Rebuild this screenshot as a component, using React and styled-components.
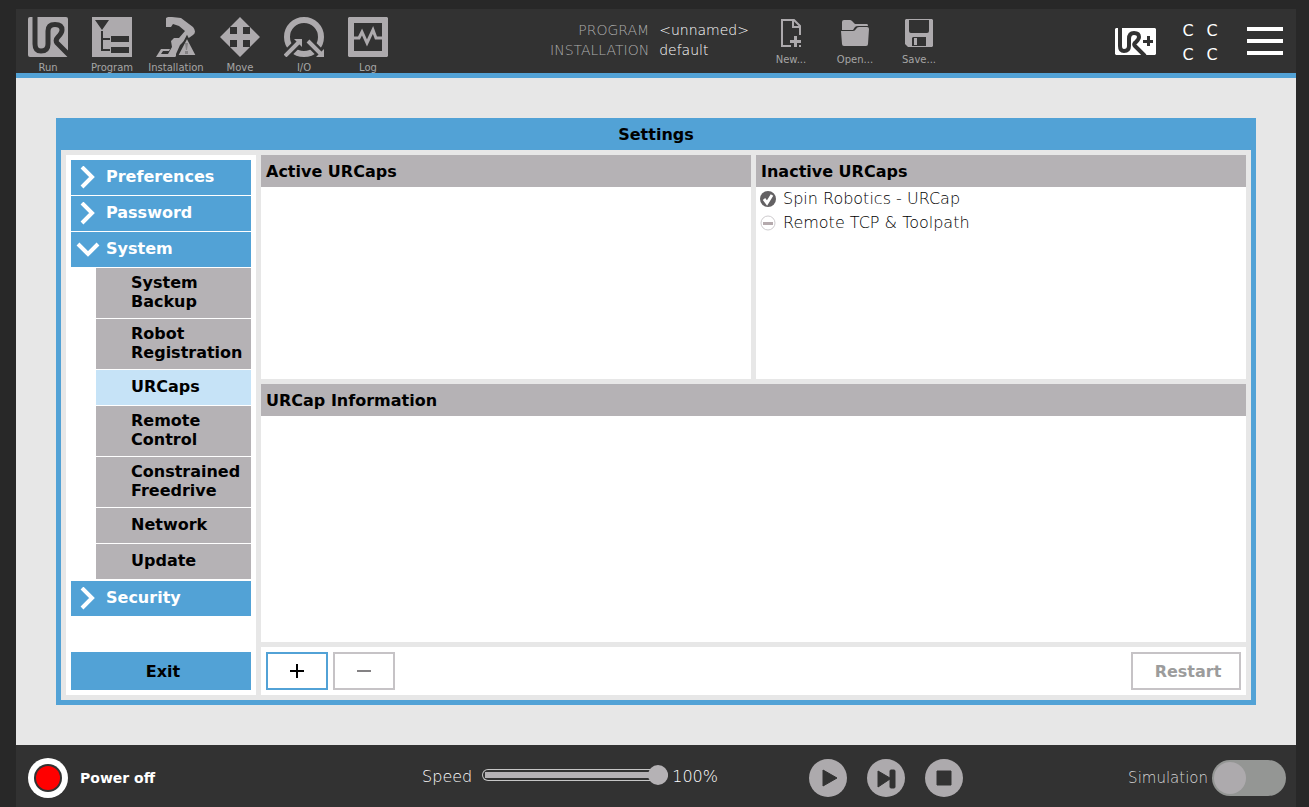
/* eslint-disable react/prop-types */

import React, { useState } from 'react'
import styled, { createGlobalStyle, css } from 'styled-components'

const blue = '#52a2d6'
const dark = '#323232'
const grey = '#b5b2b5'
const light = '#e7e7e7'
const icon = '#adaaad'

const GlobalStyle = createGlobalStyle`
  * {
    box-sizing: border-box;
  }

  body {
    margin: 0;
    background: #282828;
    font-family: 'DejaVu Sans', sans-serif;
    font-size: 16px;
    line-height: 19px;
  }

  button,
  input {
    font: inherit;
    margin: 0;
  }

  svg {
    display: block;
    flex: none;
  }
`

const Screen = styled.div`
  display: flex;
  flex-direction: column;
  min-height: 100vh;
  padding: 9px 13px 0 16px;
`

const Spacer = styled.div`
  flex: ${({ $grow }) => $grow} 0 0;
`

// Header

const Header = styled.header`
  display: flex;
  height: 69px;
  background: ${dark};
  border-bottom: 5px solid ${blue};
`

const Group = styled.nav`
  display: flex;
`

const ToolButton = styled.button`
  display: flex;
  flex-direction: column;
  align-items: center;
  gap: ${({ $small }) => ($small ? '7px' : '5px')};
  width: 64px;
  padding: ${({ $small }) => ($small ? '10px' : '8px')} 0 0;
  border: 0;
  background: none;
  color: #a5a5a5;
  font-size: 10px;
  line-height: 11px;
`

const FileInfo = styled.dl`
  display: grid;
  grid-template-columns: auto auto;
  align-content: start;
  column-gap: 10px;
  margin: 0;
  padding: 11px 10px 0 0;
  font-size: 14px;
  font-weight: 200;
  line-height: 20px;

  dt {
    color: #adadad;
    text-align: right;
  }

  dd {
    margin: 0;
    color: #fff;
  }
`

const HeaderTools = styled.div`
  display: flex;
  align-items: center;
  padding-right: 13px;
`

const Checksum = styled.div`
  display: grid;
  grid-template-columns: 24px 24px;
  margin: 0 23px 0 20px;
  padding-top: 3px;
  color: #fff;
  line-height: 24px;
  text-align: center;
`

const IconButton = styled.button`
  padding: 0;
  border: 0;
  background: none;
`

// Settings

const Workspace = styled.main`
  display: flex;
  flex: 1;
  padding: 40px;
  background: ${light};
`

const Settings = styled.section`
  display: flex;
  flex: 1;
  flex-direction: column;
  border: 5px solid ${blue};
  border-top: 0;
  background: ${light};
`

const SettingsTitle = styled.h1`
  height: 32px;
  margin: 0;
  background: ${blue};
  font-size: 16px;
  line-height: 34px;
  text-align: center;
`

const SettingsBody = styled.div`
  display: flex;
  flex: 1;
  gap: 5px;
  padding: 5px;
`

const Sidebar = styled.nav`
  display: flex;
  flex-direction: column;
  gap: 1px;
  width: 190px;
  padding: 5px;
  background: #fff;
`

const Section = styled.button`
  display: flex;
  align-items: center;
  gap: 6px;
  height: 35px;
  padding: 0 5px 0 5px;
  border: 0;
  background: ${blue};
  color: #fff;
  font-weight: 700;

  span {
    padding-bottom: 2px;
  }
`

const SubMenu = styled.div`
  display: flex;
  flex-direction: column;
  gap: 1px;
  margin: 0 0 1px 25px;
`

const SubItem = styled.button`
  min-height: 35px;
  padding: 5px 4px 7px 35px;
  border: 0;
  background: ${({ $active }) => ($active ? '#c6e3f7' : grey)};
  color: #000;
  font-weight: 700;
  text-align: left;
`

const buttonBase = css`
  display: flex;
  align-items: center;
  justify-content: center;
  height: 38px;
  font-weight: 700;
`

const ExitButton = styled.button`
  ${buttonBase}
  margin-top: auto;
  padding-left: 10px;
  border: 0;
  background: ${blue};
  color: #000;
`

const Content = styled.div`
  display: grid;
  flex: 1;
  grid-template-columns: 1fr 1fr;
  grid-template-rows: 224fr 258fr 48px;
  gap: 5px;
`

const Panel = styled.section`
  grid-column: ${({ $wide }) => ($wide ? '1 / -1' : 'auto')};
  background: #fff;
`

const PanelTitle = styled.h2`
  height: 32px;
  margin: 0;
  padding: 0 5px;
  background: ${grey};
  font-size: 16px;
  line-height: 34px;
`

const CapList = styled.ul`
  margin: 0;
  padding: 0 4px;
  list-style: none;
`

const CapItem = styled.li`
  display: flex;
  align-items: center;
  gap: 7px;
  height: 24px;
  font-weight: 200;
  line-height: 26px;
`

const Actions = styled.div`
  display: flex;
  grid-column: 1 / -1;
  gap: 5px;
  padding: 5px;
  background: #fff;
`

const ActionButton = styled.button`
  ${buttonBase}
  width: ${({ $wide }) => ($wide ? '110px' : '62px')};
  margin-left: ${({ $wide }) => ($wide ? 'auto' : '0')};
  padding: ${({ $wide }) => ($wide ? '0 0 0 4px' : '0')};
  border: 2px solid ${blue};
  background: #fff;
  color: #000;

  &:disabled {
    border-color: #c6c3c6;
    color: #9c9c9c;
  }
`

// Footer

const Footer = styled.footer`
  display: flex;
  align-items: center;
  height: 62px;
  padding: 4px 10px 0 12px;
  background: ${dark};
  color: #fff;
`

const PowerButton = styled.button`
  display: flex;
  align-items: center;
  gap: 12px;
  padding: 0;
  border: 0;
  background: none;
  color: #fff;
  font-size: 14px;
  font-weight: 700;
`

const Speed = styled.label`
  display: flex;
  align-items: center;
  padding-bottom: 3px;
  font-weight: 200;
`

const Slider = styled.input`
  width: 186px;
  height: 20px;
  margin: 0 4px 4px 10px;
  appearance: none;
  background: none;

  &::-webkit-slider-runnable-track {
    height: 12px;
    border-radius: 6px;
    background: linear-gradient(${grey}, ${grey}) center / calc(100% - 6px) 6px
      no-repeat;
    box-shadow: inset 0 0 0 1px #c6c6c6;
  }

  &::-webkit-slider-thumb {
    width: 20px;
    height: 20px;
    margin-top: -4px;
    border-radius: 50%;
    appearance: none;
    background: ${grey};
  }
`

const Playback = styled.div`
  display: flex;
  gap: 20px;
`

const Simulation = styled.label`
  display: flex;
  align-items: center;
  gap: 4px;
  color: #d6d6d6;
  font-size: 15px;
  font-weight: 200;
`

const Switch = styled.input`
  display: flex;
  width: 74px;
  height: 36px;
  padding: 2px;
  border-radius: 18px;
  appearance: none;
  background: #949694;

  &::before {
    width: 32px;
    height: 32px;
    border-radius: 50%;
    background: ${icon};
    content: '';
  }

  &:checked {
    justify-content: flex-end;
  }
`

// Icons

const Svg = ({ w = 40, h = w, children }) => (
  <svg width={w} height={h} viewBox={`0 0 ${w} ${h}`} fill={icon} aria-hidden="true">
    {children}
  </svg>
)

const RunIcon = () => (
  <Svg>
    <path d="M2 0H38Q40 0 40 2V40H2Q0 40 0 38V2Q0 0 2 0Z" />
    <path
      d="M7 -1V27Q7 34 13 34Q20 34 20 27V14Q20 7.500 27 7.500Q34 7.500 34 13Q34 16 30 20Q27 23 29 26L42 39"
      fill="none"
      stroke={dark}
      strokeWidth="5"
    />
  </Svg>
)

const ProgramIcon = () => (
  <Svg>
    <path d="M0 0H40V40H0Z" />
    <path d="M3 3H17L10 13ZM19 19H37V25H19ZM19 30H37V36H19Z" fill={dark} />
    <path d="M10 14V33H18M10 22H18" fill="none" stroke={dark} strokeWidth="2" />
  </Svg>
)

const InstallationIcon = () => (
  <Svg>
    <path d="M10 1Q13 -1 16 0L25 1L37 10Q41 15 37 18L27 25L24 28L20 37H12L16 30L15 24L18 21L23 21L29 14L23 9L17 7L15 10H10Z" />
    <path d="M5 32H14L13 34H7L5 37H20V40H0Z" />
    <path d="M31 20L41 39H21Z" fill={icon} stroke={dark} strokeWidth="2" />
    <path d="M29 26H32L31 33H30ZM29 34H32V37H29Z" fill="#848284" />
  </Svg>
)

const MoveIcon = () => (
  <Svg>
    <path d="M20 0L30 10H23V17H30V10L40 20L30 30V23H23V30H30L20 40L10 30H17V23H10V30L0 20L10 10V17H17V10H10Z" />
  </Svg>
)

const IoIcon = () => (
  <Svg>
    <circle cx="20" cy="20" r="17" fill="none" stroke={icon} strokeWidth="6" />
    <path d="M-1 41L18 22M22 22L42 42" stroke={dark} strokeWidth="9" />
    <path d="M1 39L15 25M24 24L37 37" stroke={icon} strokeWidth="4" />
    <path d="M10 22H18V30ZM40 32V40H32Z" />
  </Svg>
)

const LogIcon = () => (
  <Svg>
    <path d="M1 0H39L40 1V39L39 40H1L0 39V1ZM6 6V34H34V6Z" fillRule="evenodd" />
    <path d="M5 21H11L14 15L19 26L25 13L28 21H35" fill="none" stroke={icon} strokeWidth="3" />
  </Svg>
)

const NewIcon = () => (
  <Svg w={28}>
    <path
      d="M14 27H5V1H17L23 7V16M16 1V8H23"
      fill="none"
      stroke={icon}
      strokeWidth="2"
    />
    <path d="M17 17H20V21H24V24H20V28H17V24H13V21H17ZM22 26H24V28H22Z" />
  </Svg>
)

const OpenIcon = () => (
  <Svg w={28}>
    <path d="M1 11V3Q1 1 3 1H9Q10 1 11 2L14 5H26Q27 5 27 7H17Q15 7 14 8L12 11Z" />
    <path d="M0 12H12Q14 12 15 10Q16 8 18 8H26Q28 8 28 10L27 25Q27 27 25 27H3Q1 27 1 25Z" />
  </Svg>
)

const SaveIcon = () => (
  <Svg w={28}>
    <path d="M1 0H27L28 1V27L27 28H3L0 25V1Z" />
    <path d="M4 1H24V12Q24 14 22 14H6Q4 14 4 12ZM8 18H21V27H7V19Z" fill={dark} />
    <path d="M9 19H12V26H9Z" />
  </Svg>
)

const UrPlusIcon = () => (
  <Svg w={41} h={27}>
    <path d="M1 0H40L41 1V26L40 27H1L0 26V1Z" fill="#fff" />
    <path
      d="M5 -1V18Q5 23 9 23Q14 23 14 18V11Q14 5 19 5Q24 5 24 9Q24 11 21 14Q18 16 20 18L30 28"
      fill="none"
      stroke={dark}
      strokeWidth="4"
    />
    <path d="M32 8H35V12H38V15H35V18H32V15H28V12H32Z" fill={dark} />
  </Svg>
)

const MenuIcon = () => (
  <Svg w={36} h={28}>
    <path d="M0 0H36V4H0ZM0 12H36V16H0ZM0 24H36V28H0Z" fill="#fff" />
  </Svg>
)

const Chevron = ({ open }) => (
  <Svg w={24}>
    <path
      d={open ? 'M2 6L12 16L22 6' : 'M6 1L16 11L6 21'}
      fill="none"
      stroke="#fff"
      strokeWidth="4"
    />
  </Svg>
)

const StatusIcon = ({ ok }) => (
  <Svg w={16}>
    {ok ? (
      <>
        <circle cx="8" cy="8" r="8" fill="#636163" />
        <path d="M4 8L7 12L12 4" fill="none" stroke="#fff" strokeWidth="3" />
      </>
    ) : (
      <>
        <circle cx="8" cy="8" r="7" fill="#fff" stroke="#cecbce" />
        <path d="M3 7H13V10H3Z" fill="#b5aaad" />
      </>
    )}
  </Svg>
)

const SignIcon = ({ plus }) => (
  <Svg w={14}>
    <path d={plus ? 'M6 0H8V6H14V8H8V14H6V8H0V6H6Z' : 'M0 6H14V8H0Z'} fill={plus ? '#000' : '#848284'} />
  </Svg>
)

const PowerIcon = () => (
  <Svg>
    <circle cx="20" cy="20" r="20" fill="#fff" />
    <circle cx="20" cy="20" r="14" fill={dark} />
    <circle cx="20" cy="20" r="12" fill="#f00" />
  </Svg>
)

const playPaths = {
  Play: 'M14 11L28 19L14 27Z',
  Step: 'M11 12L23 19V12Q23 11 24 11H27Q28 11 28 12V28Q28 29 27 29H24Q23 29 23 28V20L11 28Z',
  Stop: 'M12 12H26V26H12Z',
}

const PlayIcon = ({ name }) => (
  <Svg w={38}>
    <circle cx="19" cy="19" r="19" />
    <path d={playPaths[name]} fill={dark} stroke={dark} strokeLinejoin="round" />
  </Svg>
)

const tabs = [
  ['Run', RunIcon],
  ['Program', ProgramIcon],
  ['Installation', InstallationIcon],
  ['Move', MoveIcon],
  ['I/O', IoIcon],
  ['Log', LogIcon],
]

const files = [
  ['New...', NewIcon],
  ['Open...', OpenIcon],
  ['Save...', SaveIcon],
]

const systemItems = [
  'System Backup',
  'Robot Registration',
  'URCaps',
  'Remote Control',
  'Constrained Freedrive',
  'Network',
  'Update',
]

const inactive = [
  { name: 'Spin Robotics - URCap', ok: true },
  { name: 'Remote TCP & Toolpath', ok: false },
]

const SectionButton = ({ text, open }) => (
  <Section aria-expanded={!!open}>
    <Chevron open={open} />
    <span>{text}</span>
  </Section>
)

const App = () => {
  const [active, setActive] = useState('URCaps')
  const [speed, setSpeed] = useState(100)

  return (
    <Screen>
      <GlobalStyle />
      <Header>
        <Group>
          {tabs.map(([text, Icon]) => (
            <ToolButton key={text}>
              <Icon />
              {text}
            </ToolButton>
          ))}
        </Group>
        <Spacer $grow={150} />
        <FileInfo>
          <dt>PROGRAM</dt>
          <dd>&lt;unnamed&gt;</dd>
          <dt>INSTALLATION</dt>
          <dd>default</dd>
        </FileInfo>
        <Group>
          {files.map(([text, Icon]) => (
            <ToolButton key={text} $small>
              <Icon />
              {text}
            </ToolButton>
          ))}
        </Group>
        <Spacer $grow={164} />
        <HeaderTools>
          <IconButton aria-label="UR+">
            <UrPlusIcon />
          </IconButton>
          <Checksum>
            <span>C</span>
            <span>C</span>
            <span>C</span>
            <span>C</span>
          </Checksum>
          <IconButton aria-label="Menu">
            <MenuIcon />
          </IconButton>
        </HeaderTools>
      </Header>

      <Workspace>
        <Settings>
          <SettingsTitle>Settings</SettingsTitle>
          <SettingsBody>
            <Sidebar>
              <SectionButton text="Preferences" />
              <SectionButton text="Password" />
              <SectionButton text="System" open />
              <SubMenu>
                {systemItems.map((item) => (
                  <SubItem
                    key={item}
                    $active={item === active}
                    onClick={() => setActive(item)}
                  >
                    {item}
                  </SubItem>
                ))}
              </SubMenu>
              <SectionButton text="Security" />
              <ExitButton>Exit</ExitButton>
            </Sidebar>
            <Content>
              <Panel>
                <PanelTitle>Active URCaps</PanelTitle>
              </Panel>
              <Panel>
                <PanelTitle>Inactive URCaps</PanelTitle>
                <CapList>
                  {inactive.map(({ name, ok }) => (
                    <CapItem key={name}>
                      <StatusIcon ok={ok} />
                      {name}
                    </CapItem>
                  ))}
                </CapList>
              </Panel>
              <Panel $wide>
                <PanelTitle>URCap Information</PanelTitle>
              </Panel>
              <Actions>
                <ActionButton aria-label="Add">
                  <SignIcon plus />
                </ActionButton>
                <ActionButton aria-label="Remove" disabled>
                  <SignIcon />
                </ActionButton>
                <ActionButton $wide disabled>
                  Restart
                </ActionButton>
              </Actions>
            </Content>
          </SettingsBody>
        </Settings>
      </Workspace>

      <Footer>
        <PowerButton>
          <PowerIcon />
          Power off
        </PowerButton>
        <Spacer $grow={270} />
        <Speed>
          Speed
          <Slider
            type="range"
            value={speed}
            onChange={(e) => setSpeed(Number(e.target.value))}
          />
          {speed}%
        </Speed>
        <Spacer $grow={92} />
        <Playback>
          {Object.keys(playPaths).map((name) => (
            <IconButton key={name} aria-label={name}>
              <PlayIcon name={name} />
            </IconButton>
          ))}
        </Playback>
        <Spacer $grow={167} />
        <Simulation>
          Simulation
          <Switch type="checkbox" />
        </Simulation>
      </Footer>
    </Screen>
  )
}

export default App
